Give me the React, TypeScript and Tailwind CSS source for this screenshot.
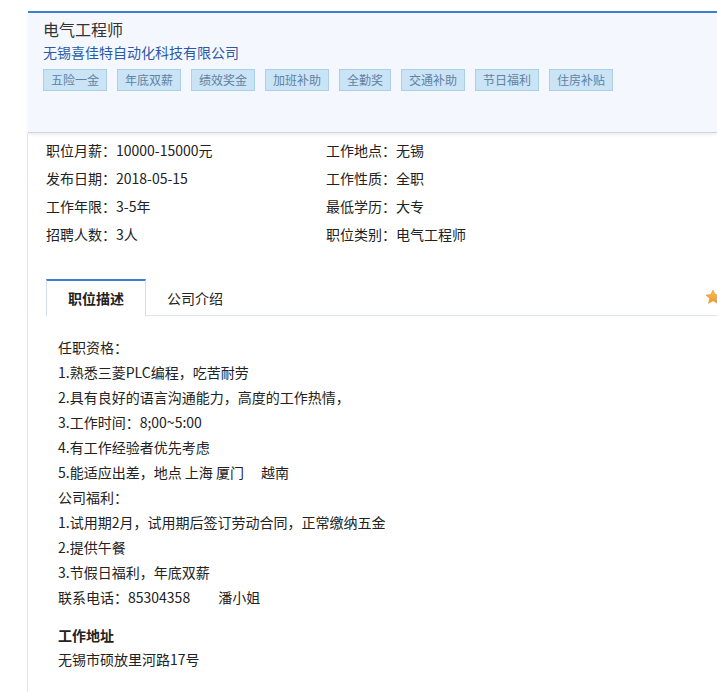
import React from "react";

const tags = ["五险一金", "年底双薪", "绩效奖金", "加班补助", "全勤奖", "交通补助", "节日福利", "住房补贴"];

const info: [string, string][] = [
	["职位月薪：10000-15000元", "工作地点：无锡"],
	["发布日期：2018-05-15", "工作性质：全职"],
	["工作年限：3-5年", "最低学历：大专"],
	["招聘人数：3人", "职位类别：电气工程师"],
];

const desc = [
	"任职资格：",
	"1.熟悉三菱PLC编程，吃苦耐劳",
	"2.具有良好的语言沟通能力，高度的工作热情，",
	"3.工作时间：8;00~5:00",
	"4.有工作经验者优先考虑",
	"5.能适应出差，地点 上海 厦门　 越南",
	"公司福利：",
	"1.试用期2月，试用期后签订劳动合同，正常缴纳五金",
	"2.提供午餐",
	"3.节假日福利，年底双薪",
	"联系电话：85304358　　潘小姐",
];

export default function App() {
	return (
		<div className="w-[717px] h-[692px] overflow-hidden bg-white text-[#333] font-['Noto_Sans_CJK_SC',sans-serif]">
			{/* HEADER */}
			<div className="pt-[11px] pl-[28px]">
				<div className="h-[122px] border-t-2 border-[#3b7fd4] border-b border-b-[#cdd4de] bg-[#f4f8fe] pl-[15px] pt-[5px] shadow-[0_2px_3px_rgba(0,0,0,0.07)]">
					<h1 className="text-[16px] leading-[22px] text-[#333]">电气工程师</h1>
					<p className="mt-px text-[14px] leading-[22px] text-[#2c58a8]">无锡喜佳特自动化科技有限公司</p>
					<div className="mt-[6px] flex gap-[10px]">
						{tags.map((t) => (
							<span
								key={t}
								className="h-[22px] px-[7px] border border-[#a8d1ee] bg-[#cae4f6] text-[12px] leading-[20px] text-[#5f82a3]"
							>
								{t}
							</span>
						))}
					</div>
				</div>
			</div>

			{/* BODY */}
			<div className="ml-[27px] h-[600px] border-l border-[#dfe6ef]">
				<div className="pl-[18px] pt-[3px] grid grid-cols-[280px_1fr] text-[14px] leading-[28px] text-[#222]">
					{info.map(([a, b]) => (
						<React.Fragment key={a}>
							<div>{a}</div>
							<div>{b}</div>
						</React.Fragment>
					))}
				</div>

				{/* TABS */}
				<div className="mt-[31px] pl-[18px] flex">
					<div className="h-[37px] w-[100px] border-t-2 border-t-[#3b7fd4] border-x border-x-[#d3dfee] bg-white flex items-center justify-center text-[14px] font-bold text-[#222]">
						职位描述
					</div>
					<div className="flex-1 h-[37px] border-b border-[#dce5ef] pt-[2px] flex items-center justify-between">
						<span className="ml-[21px] text-[14px] text-[#222]">公司介绍</span>
						<svg width="16" height="16" viewBox="0 0 24 24" className="-mr-[4px] mb-[3px]">
							<defs>
								<linearGradient id="st" x1="0" y1="0" x2="0" y2="1">
									<stop offset="0" stopColor="#f9c349" />
									<stop offset="1" stopColor="#f0962a" />
								</linearGradient>
							</defs>
							<path
								d="M12 1.5l3.1 6.9 7.4.7-5.6 5 1.7 7.4L12 17.6l-6.6 3.9 1.7-7.4-5.6-5 7.4-.7z"
								fill="url(#st)"
								stroke="#e08a1e"
								strokeWidth="0.8"
							/>
						</svg>
					</div>
				</div>

				{/* DESCRIPTION */}
				<div className="mt-[19px] pl-[30px] text-[14px] leading-[25px] text-[#222]">
					{desc.map((l) => (
						<p key={l} className="whitespace-pre">{l}</p>
					))}
					<h3 className="mt-[13px] font-bold leading-[24px]">工作地址</h3>
					<p>无锡市硕放里河路17号</p>
				</div>
			</div>
		</div>
	);
}
